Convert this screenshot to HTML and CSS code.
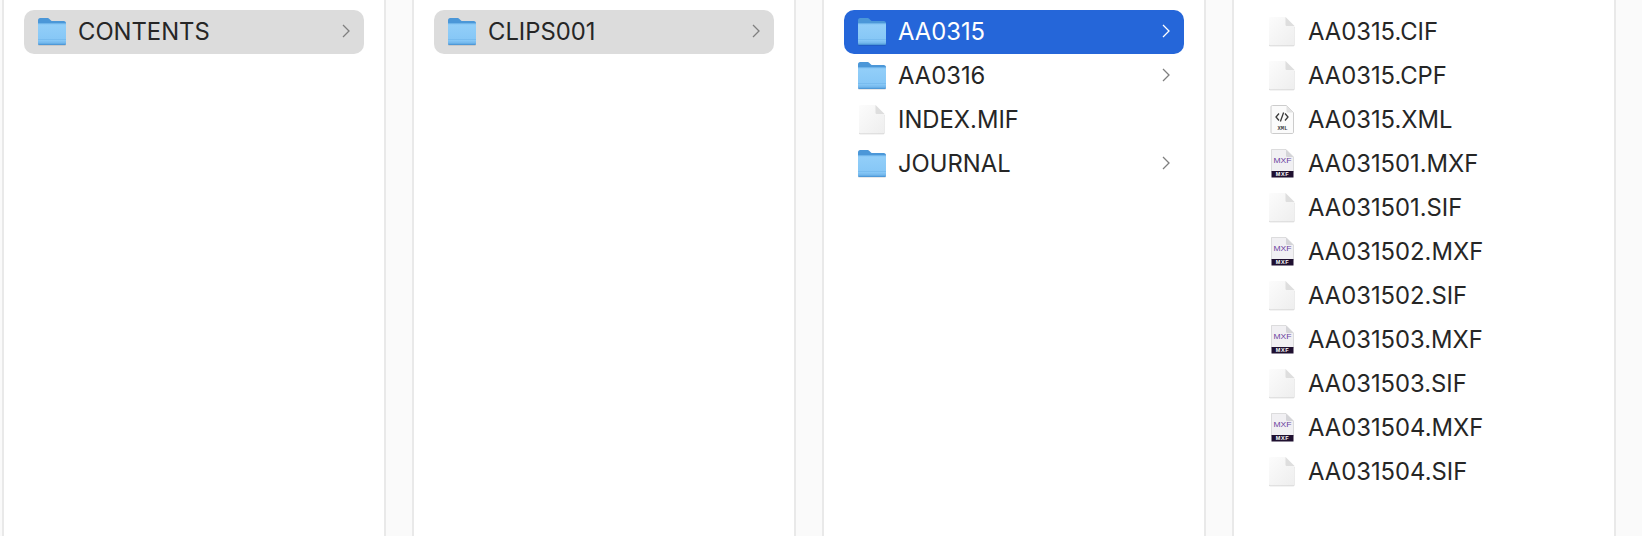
FILE: index.html
```html
<!DOCTYPE html>
<html>
<head>
  <title>Finder columns</title>
  <link rel="stylesheet" href="styles.css">
</head>
<body>
  <svg class="defs" width="0" height="0">
    <defs>
      <linearGradient id="folderFront" x1="0" y1="0" x2="0" y2="1">
        <stop offset="0" stop-color="#93cff9"/>
        <stop offset="1" stop-color="#82c4f5"/>
      </linearGradient>
      <linearGradient id="docFill" x1="0" y1="0" x2="1" y2="1">
        <stop offset="0" stop-color="#fcfcfc"/>
        <stop offset="1" stop-color="#eeeeee"/>
      </linearGradient>
      <symbol id="folder" viewBox="0 0 30 29">
        <rect x="1" y="26" width="28" height="2.4" rx="1" fill="#000" opacity=".18"/>
        <path d="M1 3.500C1 2 1.800 1 3.200 1h7c1 0 1.500.3 2.200 1l1.600 1.600c.4.4.8.5 1.400.5h11.400C28.200 4.100 29 5 29 6.400V12H1z" fill="#4b97d8"/>
        <path d="M1 6.500h28V26c0 1.200-.8 2-2 2H3c-1.200 0-2-.8-2-2z" fill="url(#folderFront)"/>
        <path d="M1 6.500h28v.7H1z" fill="#6fb4ea"/>
        <path d="M1 22.500h28v.6H1zM1 24.800h28v.6H1z" fill="#62a8e2" opacity=".7"/>
        <path d="M1 26.500h28v.2c0 .8-.8 1.300-2 1.300H3c-1.200 0-2-.5-2-1.300z" fill="#4f99d8"/>
      </symbol>
      <symbol id="doc" viewBox="0 0 28 31">
        <path d="M2.500 1.500h15l9 9v17.500c0 1-.6 1.500-1.500 1.500H2.500c-.9 0-1.500-.5-1.500-1.500V3c0-1 .6-1.500 1.500-1.500z" fill="#cfcfcf" transform="translate(0 .8)"/>
        <path d="M2.500 1h15l9 9v18c0 1-.6 1.500-1.500 1.500H2.500c-.9 0-1.500-.5-1.500-1.500V2.500C1 1.500 1.600 1 2.500 1z" fill="url(#docFill)"/>
        <path d="M17.500 1l9 9h-7.500c-1 0-1.500-.5-1.500-1.500z" fill="#dedede"/>
      </symbol>
      <symbol id="xml" viewBox="0 0 28 31">
        <path d="M4.500 1.500h14l7 7v19.500c0 1-.6 1.500-1.500 1.500H4.500c-.9 0-1.500-.5-1.500-1.500V3c0-1 .6-1.500 1.500-1.500z" fill="#fbfbfb" stroke="#cccccc"/>
        <path d="M18.500 1.500l7 7h-5.500c-1 0-1.500-.5-1.500-1.500z" fill="#e2e2e2"/>
        <path d="M11 9.500L8 13l3 3.500M17 9.500l3 3.500-3 3.500M15.600 8.500l-3.200 9" fill="none" stroke="#3a3a3a" stroke-width="1.300"/>
        <text x="14.500" y="25.500" class="xml-label">XML</text>
      </symbol>
      <symbol id="mxf" viewBox="0 0 28 31">
        <path d="M3.500 1.500h14.500l7.500 7.500v15H3.500z" fill="#f1f0f3" stroke="#c9c9c9" stroke-width=".6"/>
        <path d="M18 1.500L25.500 9h-6c-1 0-1.500-.5-1.500-1.500z" fill="#d4d4d8"/>
        <text x="14.500" y="14.500" textLength="18" lengthAdjust="spacingAndGlyphs" class="mxf-logo">MXF</text>
        <rect x="3.500" y="23" width="22" height="6.500" fill="#1f1030"/>
        <text x="14.500" y="28.300" class="mxf-label">MXF</text>
      </symbol>
      <symbol id="chevron" viewBox="0 0 10 14">
        <path d="M2 1L8 7l-6 6" fill="none" stroke="currentColor" stroke-width="1.300"/>
      </symbol>
    </defs>
  </svg>

  <div class="browser">
    <div class="col">
      <div class="row inactive">
        <svg class="icon"><use href="#folder"/></svg>
        <span class="name">CONTENTS</span>
        <svg class="arrow"><use href="#chevron"/></svg>
      </div>
    </div>

    <div class="col">
      <div class="row inactive">
        <svg class="icon"><use href="#folder"/></svg>
        <span class="name">CLIPS001</span>
        <svg class="arrow"><use href="#chevron"/></svg>
      </div>
    </div>

    <div class="col">
      <div class="row selected">
        <svg class="icon"><use href="#folder"/></svg>
        <span class="name">AA0315</span>
        <svg class="arrow"><use href="#chevron"/></svg>
      </div>
      <div class="row">
        <svg class="icon"><use href="#folder"/></svg>
        <span class="name">AA0316</span>
        <svg class="arrow"><use href="#chevron"/></svg>
      </div>
      <div class="row">
        <svg class="icon"><use href="#doc"/></svg>
        <span class="name">INDEX.MIF</span>
      </div>
      <div class="row">
        <svg class="icon"><use href="#folder"/></svg>
        <span class="name">JOURNAL</span>
        <svg class="arrow"><use href="#chevron"/></svg>
      </div>
    </div>

    <div class="col">
      <div class="row"><svg class="icon"><use href="#doc"/></svg><span class="name">AA0315.CIF</span></div>
      <div class="row"><svg class="icon"><use href="#doc"/></svg><span class="name">AA0315.CPF</span></div>
      <div class="row"><svg class="icon"><use href="#xml"/></svg><span class="name">AA0315.XML</span></div>
      <div class="row"><svg class="icon"><use href="#mxf"/></svg><span class="name">AA031501.MXF</span></div>
      <div class="row"><svg class="icon"><use href="#doc"/></svg><span class="name">AA031501.SIF</span></div>
      <div class="row"><svg class="icon"><use href="#mxf"/></svg><span class="name">AA031502.MXF</span></div>
      <div class="row"><svg class="icon"><use href="#doc"/></svg><span class="name">AA031502.SIF</span></div>
      <div class="row"><svg class="icon"><use href="#mxf"/></svg><span class="name">AA031503.MXF</span></div>
      <div class="row"><svg class="icon"><use href="#doc"/></svg><span class="name">AA031503.SIF</span></div>
      <div class="row"><svg class="icon"><use href="#mxf"/></svg><span class="name">AA031504.MXF</span></div>
      <div class="row"><svg class="icon"><use href="#doc"/></svg><span class="name">AA031504.SIF</span></div>
    </div>
  </div>
</body>
</html>
```

FILE: styles.css
```css
html, body {
  margin: 0;
  height: 100%;
  overflow: hidden;
  background-color: #fafafa;
}
body {
  font-family: Inter, "Noto Sans", sans-serif;
}
.defs {
  position: absolute;
}
.browser {
  display: flex;
  gap: 26px;
  height: 536px;
  padding-left: 2px;
}
.col {
  width: 340px;
  padding: 10px 20px 0;
  background-color: white;
  border-left: 2px solid #e9e9e9;
  border-right: 2px solid #e9e9e9;
}
.row {
  display: flex;
  align-items: center;
  box-sizing: border-box;
  height: 44px;
  padding: 0 13px 2px 13px;
  border-radius: 10px;
  color: #262626;
}
.icon {
  width: 30px;
  height: 31px;
  flex: none;
}
.name {
  flex: 1;
  margin-top: 2px;
  margin-left: 11px;
  font-size: 23.8px;
  line-height: 40px;
  white-space: nowrap;
}
.arrow {
  width: 10px;
  height: 14px;
  flex: none;
  color: #7f7f7f;
}
.inactive {
  background-color: #dcdcdc;
}
.selected {
  background-color: #2566d9;
  color: white;
}
.selected .arrow {
  color: white;
}
.xml-label {
  font: 700 5.5px "Liberation Mono", monospace;
  text-anchor: middle;
  fill: #444;
}
.mxf-logo {
  font: 400 6.5px "Liberation Sans", sans-serif;
  text-anchor: middle;
  fill: #6a3fa0;
}
.mxf-label {
  font: 700 5.5px "Liberation Sans", sans-serif;
  letter-spacing: .6px;
  text-anchor: middle;
  fill: white;
}
```
